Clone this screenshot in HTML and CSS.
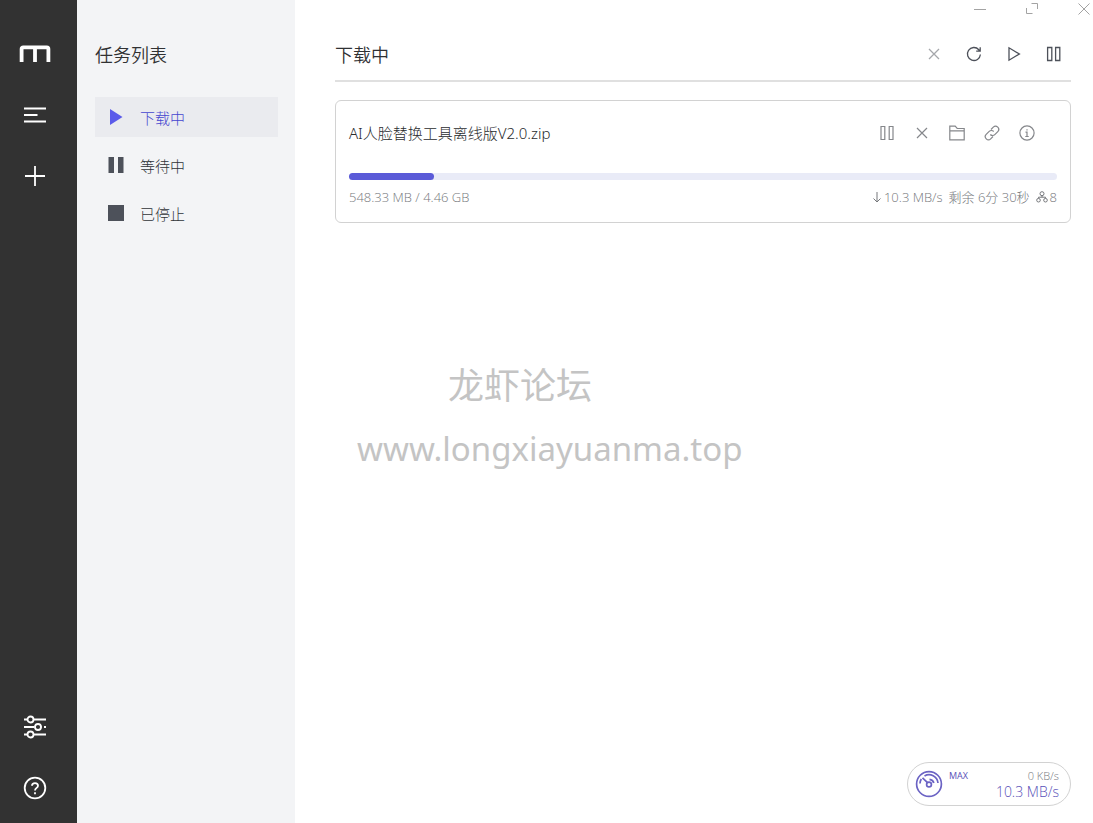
FILE: index.html
```html
<!DOCTYPE html>
<html lang="zh-CN">
<head>
<meta charset="utf-8">
<meta name="viewport" content="width=device-width, initial-scale=1">
<title>下载中</title>
<link rel="stylesheet" href="styles.css">
</head>
<body>
<div class="app">
  <aside class="rail">
    <nav class="rail-group" aria-label="主菜单">
      <a class="rail-item" href="#" aria-label="首页"><svg width="32" height="18" viewBox="0 0 32 18"><path d="M2.6 17V4Q2.6 2.4 4.2 2.4H27.8Q29.4 2.4 29.4 4V17M16 2.4V17" fill="none" stroke="#fff" stroke-width="3.8"/></svg></a>
      <button class="rail-item" type="button" aria-label="任务"><svg width="24" height="24" viewBox="0 0 24 24"><path d="M1 5.500H23M1 12H14.500M1 18.500H23" fill="none" stroke="#fff" stroke-width="1.800"/></svg></button>
      <button class="rail-item" type="button" aria-label="新建"><svg width="24" height="24" viewBox="0 0 24 24"><path d="M2 12H22M12 2V22" fill="none" stroke="#fff" stroke-width="1.800"/></svg></button>
    </nav>
    <div class="rail-group">
      <button class="rail-item" type="button" aria-label="设置"><svg width="24" height="24" viewBox="0 0 24 24" fill="none" stroke="#fff" stroke-width="1.800"><path d="M1 4.500H4M11 4.500H23M1 12H11.500M18.500 12H19M21 12H23M1 19.500H4M11 19.500H23"/><circle cx="7.500" cy="4.500" r="3"/><circle cx="15" cy="12" r="3"/><circle cx="7.500" cy="19.500" r="3"/></svg></button>
      <button class="rail-item" type="button" aria-label="帮助"><svg width="24" height="24" viewBox="0 0 24 24" fill="none" stroke="#fff" stroke-width="1.800"><circle cx="12" cy="12" r="10.300"/><path d="M9 9.700C9 6.200 15 6.200 15 9.700C15 12 12 11.800 12 14.600M12 16.200V18.200"/></svg></button>
    </div>
  </aside>

  <nav class="subnav" aria-label="任务列表">
    <h2 class="heading">任务列表</h2>
    <ul class="menu">
      <li><a class="menu-item menu-item-active" href="#"><svg width="18" height="18" viewBox="0 0 18 18"><path d="M3 1V17L15.500 9Z" fill="#5b5bea"/></svg><span>下载中</span></a></li>
      <li><a class="menu-item" href="#"><svg width="18" height="18" viewBox="0 0 18 18"><path d="M1.500 1H7V17H1.500ZM11 1H16.500V17H11Z" fill="#4d515a"/></svg><span>等待中</span></a></li>
      <li><a class="menu-item" href="#"><svg width="18" height="18" viewBox="0 0 18 18"><path d="M1 1H17V17H1Z" fill="#4d515a"/></svg><span>已停止</span></a></li>
    </ul>
  </nav>

  <main class="main">
    <header class="panel-head">
      <h1 class="heading">下载中</h1>
      <div class="actions">
        <button type="button" class="icon-button faint" aria-label="删除"><svg width="16" height="16" viewBox="0 0 16 16"><path d="M3 3L13 13M13 3L3 13"/></svg></button>
        <button type="button" class="icon-button" aria-label="刷新"><svg width="16" height="16" viewBox="0 0 16 16"><path d="M14.400 8.500A6.500 6.500 0 1 1 12.800 3.700L14.200 5.200M14.200 1.200V5.200H10.200"/></svg></button>
        <button type="button" class="icon-button" aria-label="全部开始"><svg width="16" height="16" viewBox="0 0 16 16"><path d="M3 1.800V14.200L13.400 8Z"/></svg></button>
        <button type="button" class="icon-button" aria-label="全部暂停"><svg width="16" height="16" viewBox="0 0 16 16"><path d="M1.600 1.500H5.800V14.500H1.600ZM9.600 1.500H13.800V14.500H9.600Z"/></svg></button>
      </div>
    </header>

    <article class="task">
      <div class="task-top">
        <h3 class="task-name">AI人脸替换工具离线版V2.0.zip</h3>
        <div class="task-actions">
          <button type="button" class="icon-button" aria-label="暂停"><svg width="16" height="16" viewBox="0 0 16 16"><path d="M2 1.500H5.800V14.500H2ZM10.200 1.500H14V14.500H10.200Z"/></svg></button>
          <button type="button" class="icon-button" aria-label="删除"><svg width="16" height="16" viewBox="0 0 16 16"><path d="M3 3L13 13M13 3L3 13"/></svg></button>
          <button type="button" class="icon-button" aria-label="打开文件夹"><svg width="16" height="16" viewBox="0 0 16 16"><path d="M.8 14.800V1.200H6.200L8.200 3.500H15.200V14.800ZM.8 5.800H15.200"/></svg></button>
          <button type="button" class="icon-button" aria-label="复制链接"><svg width="16" height="16" viewBox="0 0 16 16"><path d="M7 4.500L9.300 2.200A3.100 3.100 0 0 1 13.800 6.600L10.800 9.600A3.100 3.100 0 0 1 6.300 9.500M9 11.500L6.700 13.800A3.100 3.100 0 0 1 2.200 9.400L5.200 6.400A3.100 3.100 0 0 1 9.700 6.500"/></svg></button>
          <button type="button" class="icon-button" aria-label="详情"><svg width="16" height="16" viewBox="0 0 16 16"><circle cx="8" cy="8" r="7.100"/><path d="M8 4.200V5.600M6.500 7.200H8V11.500M6.300 11.500H9.700"/></svg></button>
        </div>
      </div>
      <div class="progress" role="progressbar" aria-label="下载进度" aria-valuenow="12" aria-valuemin="0" aria-valuemax="100"><div class="progress-fill" style="width:12%"></div></div>
      <div class="task-info">
        <span>548.33 MB / 4.46 GB</span>
        <div class="task-stats">
          <span class="stat"><svg width="10" height="12" viewBox="0 0 10 12"><path d="M5 1V11M1.500 7.500L5 11L8.500 7.500"/></svg>10.3 MB/s</span>
          <span>剩余 6分 30秒</span>
          <span class="stat"><svg width="12" height="12" viewBox="0 0 12 12"><circle cx="6" cy="2.700" r="2"/><circle cx="2.500" cy="9.200" r="1.800"/><circle cx="9.500" cy="9.200" r="1.800"/><path d="M6 4.700V6.200M2.500 7.400V6.200H9.500V7.400"/></svg>8</span>
        </div>
      </div>
    </article>
  </main>

  <div class="window-controls">
    <button type="button" class="icon-button" aria-label="最小化"><svg width="12" height="12" viewBox="0 0 12 12"><path d="M0 6.500H12"/></svg></button>
    <button type="button" class="icon-button" aria-label="最大化"><svg width="12" height="12" viewBox="0 0 12 12"><path d="M5.500 .5H11.500V6M.5 5V10.500H6.500"/></svg></button>
    <button type="button" class="icon-button" aria-label="关闭"><svg width="12" height="12" viewBox="0 0 12 12"><path d="M.5 .5L11.500 11.500M11.500 .5L.5 11.500"/></svg></button>
  </div>

  <div class="watermark">
    <p class="watermark-name">龙虾论坛</p>
    <p class="watermark-site">www.longxiayuanma.top</p>
  </div>

  <div class="speed">
    <svg width="28" height="28" viewBox="0 0 28 28" fill="none" stroke="#6b63c4" stroke-width="1.700"><circle cx="14" cy="14" r="12.400"/><path d="M5 13.500A9 9 0 0 1 6.300 9M9.500 6A9 9 0 0 1 23 13M14.500 9.300A4.800 4.800 0 0 1 18.800 13M7.500 7.800L12.500 12.700"/><circle cx="14" cy="14.500" r="2.400"/></svg>
    <span class="speed-mode">MAX</span>
    <div class="speed-values"><span class="speed-up">0 KB/s</span><span class="speed-down">10.3 MB/s</span></div>
  </div>
</div>
</body>
</html>
```
FILE: styles.css
```css
* {
  box-sizing: border-box;
}

body,
h1,
h2,
h3,
p,
ul {
  margin: 0;
  padding: 0;
}

body {
  font-family: "Open Sans", "Noto Sans CJK SC", sans-serif;
  font-weight: 300;
  color: #303133;
  background: #fff;
}

button {
  padding: 0;
  border: 0;
  background: none;
  font: inherit;
  color: inherit;
}

svg {
  display: block;
  flex: none;
}

.app {
  position: relative;
  display: flex;
  min-height: 100vh;
}

.rail {
  display: flex;
  flex: none;
  flex-direction: column;
  justify-content: space-between;
  width: 77px;
  padding: 38px 7px 19px 0;
  background: #323232;
}

.rail-group {
  display: flex;
  flex-direction: column;
  gap: 29px;
}

.rail-item {
  display: flex;
  align-items: center;
  justify-content: center;
  height: 32px;
}

.subnav {
  flex: none;
  width: 218px;
  padding: 42px 17px 0 18px;
  background: #f3f4f6;
}

.heading {
  font-size: 18px;
  font-weight: 350;
  line-height: 26px;
}

.menu {
  display: flex;
  flex-direction: column;
  gap: 8px;
  margin-top: 29px;
  list-style: none;
}

.menu-item {
  display: flex;
  align-items: center;
  gap: 15px;
  height: 40px;
  padding: 0 12px;
  font-size: 15px;
  color: #303338;
  text-decoration: none;
}

.menu-item-active {
  color: #4646d0;
  background: #eaebef;
}

.main {
  flex: 1;
  min-width: 0;
  padding: 42px 22px 0 40px;
}

.panel-head {
  display: flex;
  justify-content: space-between;
  padding-bottom: 12px;
  border-bottom: 2px solid #e0e0e0;
}

.icon-button {
  display: flex;
  align-items: center;
  justify-content: center;
}

.icon-button svg,
.stat svg {
  fill: none;
  stroke: currentColor;
}

.actions {
  display: flex;
  align-items: center;
  gap: 24px;
  height: 24px;
  padding-right: 9px;
  color: #4d515a;
}

.actions svg {
  stroke-width: 1.3;
}

.faint {
  color: #a5a7ab;
}

.task {
  margin-top: 18px;
  padding: 15px 13px 16px;
  border: 1px solid #d2d2d2;
  border-radius: 6px;
}

.task-top {
  display: flex;
  align-items: center;
  justify-content: space-between;
}

.task-name {
  font-family: "Noto Sans", "Noto Sans CJK SC", sans-serif;
  font-size: 15px;
  font-weight: 300;
  line-height: 22px;
  color: #2a2c2e;
}

.task-actions {
  display: flex;
  gap: 19px;
  padding: 9px 22px;
  color: #85878b;
}

.task-actions svg {
  stroke-width: 1.2;
}

.progress {
  height: 7px;
  margin-top: 23px;
  border-radius: 4px;
  background: #e9ebf7;
}

.progress-fill {
  height: 100%;
  border-radius: 4px;
  background: #5b5bd8;
}

.task-info {
  display: flex;
  justify-content: space-between;
  margin-top: 8px;
  font-size: 13px;
  line-height: 18px;
  color: #76787c;
}

.task-stats {
  display: flex;
  gap: 6px;
}

.stat {
  display: flex;
  align-items: center;
  gap: 2px;
}

.window-controls {
  position: absolute;
  top: 3px;
  right: 3px;
  display: flex;
  gap: 40px;
  color: #a3a3a3;
}

.watermark {
  position: absolute;
  top: 354px;
  left: 357px;
  font-family: "Noto Sans", "Noto Sans CJK SC", sans-serif;
  font-size: 36px;
  font-weight: 400;
  line-height: 63px;
  color: #c4c4c4;
}

.watermark-name {
  padding-left: 91px;
}

.watermark-site {
  font-size: 33px;
}

.speed {
  position: absolute;
  right: 22px;
  bottom: 17px;
  display: flex;
  width: 164px;
  height: 44px;
  padding: 7px 11px 0 7px;
  border: 1px solid #d2d2d2;
  border-radius: 22px;
  background: #fff;
  color: #5850b8;
}

.speed-mode {
  margin-left: 6px;
  font-size: 9px;
  font-weight: 400;
  line-height: 12px;
}

.speed-values {
  display: flex;
  flex: 1;
  flex-direction: column;
  align-items: flex-end;
}

.speed-up {
  font-size: 11px;
  line-height: 12px;
  color: #76787c;
}

.speed-down {
  font-size: 14px;
  line-height: 20px;
}
```
